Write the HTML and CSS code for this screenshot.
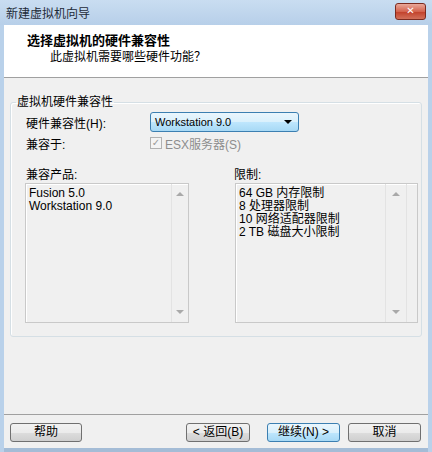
FILE: index.html
```html
<!DOCTYPE html>
<html lang="zh-CN">
<head>
    <meta charset="UTF-8">
    <title>新建虚拟机向导</title>
    <link rel="stylesheet" href="styles.css">
</head>
<body>
    <div class="window">
        <div class="titlebar">
            <span class="title">新建虚拟机向导</span>
            <button class="close">&#x2715;</button>
        </div>

        <div class="frame">
            <div class="header">
                <div class="header-title">选择虚拟机的硬件兼容性</div>
                <div class="header-sub">此虚拟机需要哪些硬件功能？</div>
            </div>

            <div class="content">
                <fieldset class="group">
                    <legend>虚拟机硬件兼容性</legend>

                    <div class="row row-combo">
                        <span class="row-label">硬件兼容性(H):</span>
                        <div class="combo">
                            <span>Workstation 9.0</span>
                            <span class="combo-arrow"></span>
                        </div>
                    </div>

                    <div class="row row-check">
                        <span class="row-label">兼容于:</span>
                        <span class="check">&#x2713;</span>
                        <span class="check-text">ESX服务器(S)</span>
                    </div>

                    <div class="lists">
                        <div class="list-col">
                            <div class="list-label">兼容产品:</div>
                            <div class="listbox">
                                <div class="list-items">
                                    <div>Fusion 5.0</div>
                                    <div>Workstation 9.0</div>
                                </div>
                                <div class="scroll">
                                    <span class="arrow-up"></span>
                                    <span class="arrow-down"></span>
                                </div>
                            </div>
                        </div>
                        <div class="list-col list-col-right">
                            <div class="list-label">限制:</div>
                            <div class="listbox">
                                <div class="list-items">
                                    <div>64 GB 内存限制</div>
                                    <div>8 处理器限制</div>
                                    <div>10 网络适配器限制</div>
                                    <div>2 TB 磁盘大小限制</div>
                                </div>
                                <div class="scroll">
                                    <span class="arrow-up"></span>
                                    <span class="arrow-down"></span>
                                </div>
                            </div>
                        </div>
                    </div>
                </fieldset>
            </div>

            <div class="footer">
                <button class="btn btn-help">帮助</button>
                <div class="footer-right">
                    <button class="btn btn-back">&lt; 返回(B)</button>
                    <button class="btn btn-next">继续(N) &gt;</button>
                    <button class="btn btn-cancel">取消</button>
                </div>
            </div>
        </div>
    </div>
</body>
</html>
```

FILE: styles.css
```css
/* Page */
body {
    margin: 0;
    padding: 0;
    font-family: "Liberation Sans", "Noto Sans CJK SC", sans-serif;
    font-size: 12px;
    color: #000;
}

.window {
    width: 432px;
    height: 452px;
    display: flex;
    flex-direction: column;
    background: #b9d1ea;
}

/* Title bar */
.titlebar {
    height: 25px;
    flex: none;
    display: flex;
    align-items: center;
    justify-content: space-between;
    padding: 0 6px 0 6px;
    background: linear-gradient(#c9ddf1, #b7cfe9);
}

.title {
    font-size: 12px;
    color: #1e2a38;
}

.close {
    width: 31px;
    height: 17px;
    margin-top: -3px;
    padding: 0;
    border: 1px solid #7b2b20;
    border-radius: 3px;
    background: linear-gradient(#e9a89a, #d4644f 50%, #c13f29 51%, #d2705a);
    color: #fff;
    font-family: "DejaVu Sans", sans-serif;
    font-size: 10px;
    font-weight: bold;
    line-height: 14px;
}

/* Window body */
.frame {
    flex: 1;
    display: flex;
    flex-direction: column;
    margin: 0 4px 0 4px;
    border-bottom: 4px solid #a4bcd6;
    background: #f0f0f0;
}

.header {
    height: 52px;
    flex: none;
    background: #fff;
    border-bottom: 1px solid #a0a0a0;
}

.header-title {
    margin: 7px 0 0 23px;
    font-size: 13px;
    font-weight: bold;
    line-height: 17px;
}

.header-sub {
    margin: 0 0 0 46px;
    line-height: 17px;
}

.content {
    flex: 1;
    padding: 16px 6px 0 6px;
}

/* Group box */
.group {
    margin: 0;
    padding: 2px 3px 13px 14px;
    border: 1px solid #d5dfe5;
    border-radius: 3px;
    box-shadow: inset 1px 1px 0 #fff;
}

.group legend {
    padding: 0 1px;
    margin-left: -9px;
    line-height: 16px;
}

.row {
    display: flex;
    align-items: center;
    padding-left: 1px;
}

.row-label {
    width: 124px;
    flex: none;
}

.row-combo {
    height: 20px;
}

.row-check {
    height: 18px;
    margin-top: 2px;
}

.combo {
    box-sizing: border-box;
    width: 149px;
    height: 20px;
    display: flex;
    align-items: center;
    justify-content: space-between;
    padding: 0 6px 0 4px;
    border: 1px solid #3c7fb1;
    border-radius: 3px;
    background: linear-gradient(#eaf6fd, #d9f0fc 50%, #bee6fd 51%, #a7d9f5);
    font-size: 11px;
}

.combo-arrow {
    width: 0;
    height: 0;
    border-left: 4px solid transparent;
    border-right: 4px solid transparent;
    border-top: 4px solid #000;
}

.check {
    width: 10px;
    height: 10px;
    border: 1px solid #b1b1b1;
    background: #f4f4f4;
    color: #9a9a9a;
    font-family: "DejaVu Sans", sans-serif;
    font-size: 10px;
    line-height: 10px;
    text-align: center;
}

.check-text {
    margin-left: 3px;
    color: #8d8d8d;
}

/* Lists */
.lists {
    display: flex;
    justify-content: space-between;
    margin-top: 15px;
}

.list-col {
    width: 164px;
}

.list-col-right {
    width: 183px;
}

.list-label {
    height: 16px;
    line-height: 16px;
    padding-left: 1px;
}

.list-col-right .list-label {
    margin-left: -2px;
}

.listbox {
    height: 138px;
    display: flex;
    border: 1px solid #c9c9c9;
    box-shadow: inset 1px 1px 0 #fff;
}

.list-items {
    flex: 1;
    padding: 3px 0 0 3px;
    line-height: 13px;
}

.scroll {
    width: 16px;
    display: flex;
    flex-direction: column;
    justify-content: space-between;
    align-items: center;
    padding: 8px 0 8px 0;
    border-left: 1px solid #e3e3e3;
}

.list-col-right .scroll {
    width: 20px;
    margin-right: 10px;
    border-right: 1px solid #e3e3e3;
}

.arrow-up {
    width: 0;
    height: 0;
    border-left: 4px solid transparent;
    border-right: 4px solid transparent;
    border-bottom: 4px solid #a9a9a9;
}

.arrow-down {
    width: 0;
    height: 0;
    border-left: 4px solid transparent;
    border-right: 4px solid transparent;
    border-top: 4px solid #a9a9a9;
}

/* Footer */
.footer {
    box-sizing: border-box;
    height: 34px;
    flex: none;
    display: flex;
    justify-content: space-between;
    align-items: flex-start;
    padding: 8px 7px 0 6px;
    border-top: 1px solid #a0a0a0;
}

.footer-right {
    display: flex;
}

.btn {
    height: 19px;
    padding: 0;
    border: 1px solid #707070;
    border-radius: 3px;
    background: linear-gradient(#f2f2f2, #ebebeb 50%, #dddddd 51%, #cfcfcf);
    font-family: "Liberation Sans", "Noto Sans CJK SC", sans-serif;
    font-size: 12px;
    line-height: 15px;
    color: #000;
}

.btn-help {
    width: 72px;
}

.btn-back {
    width: 64px;
}

.btn-next {
    width: 73px;
    margin-left: 17px;
    border-color: #3c7fb1;
    background: linear-gradient(#eaf6fd, #d9f0fc 50%, #bee6fd 51%, #a7d9f5);
}

.btn-cancel {
    width: 73px;
    margin-left: 8px;
}
```
